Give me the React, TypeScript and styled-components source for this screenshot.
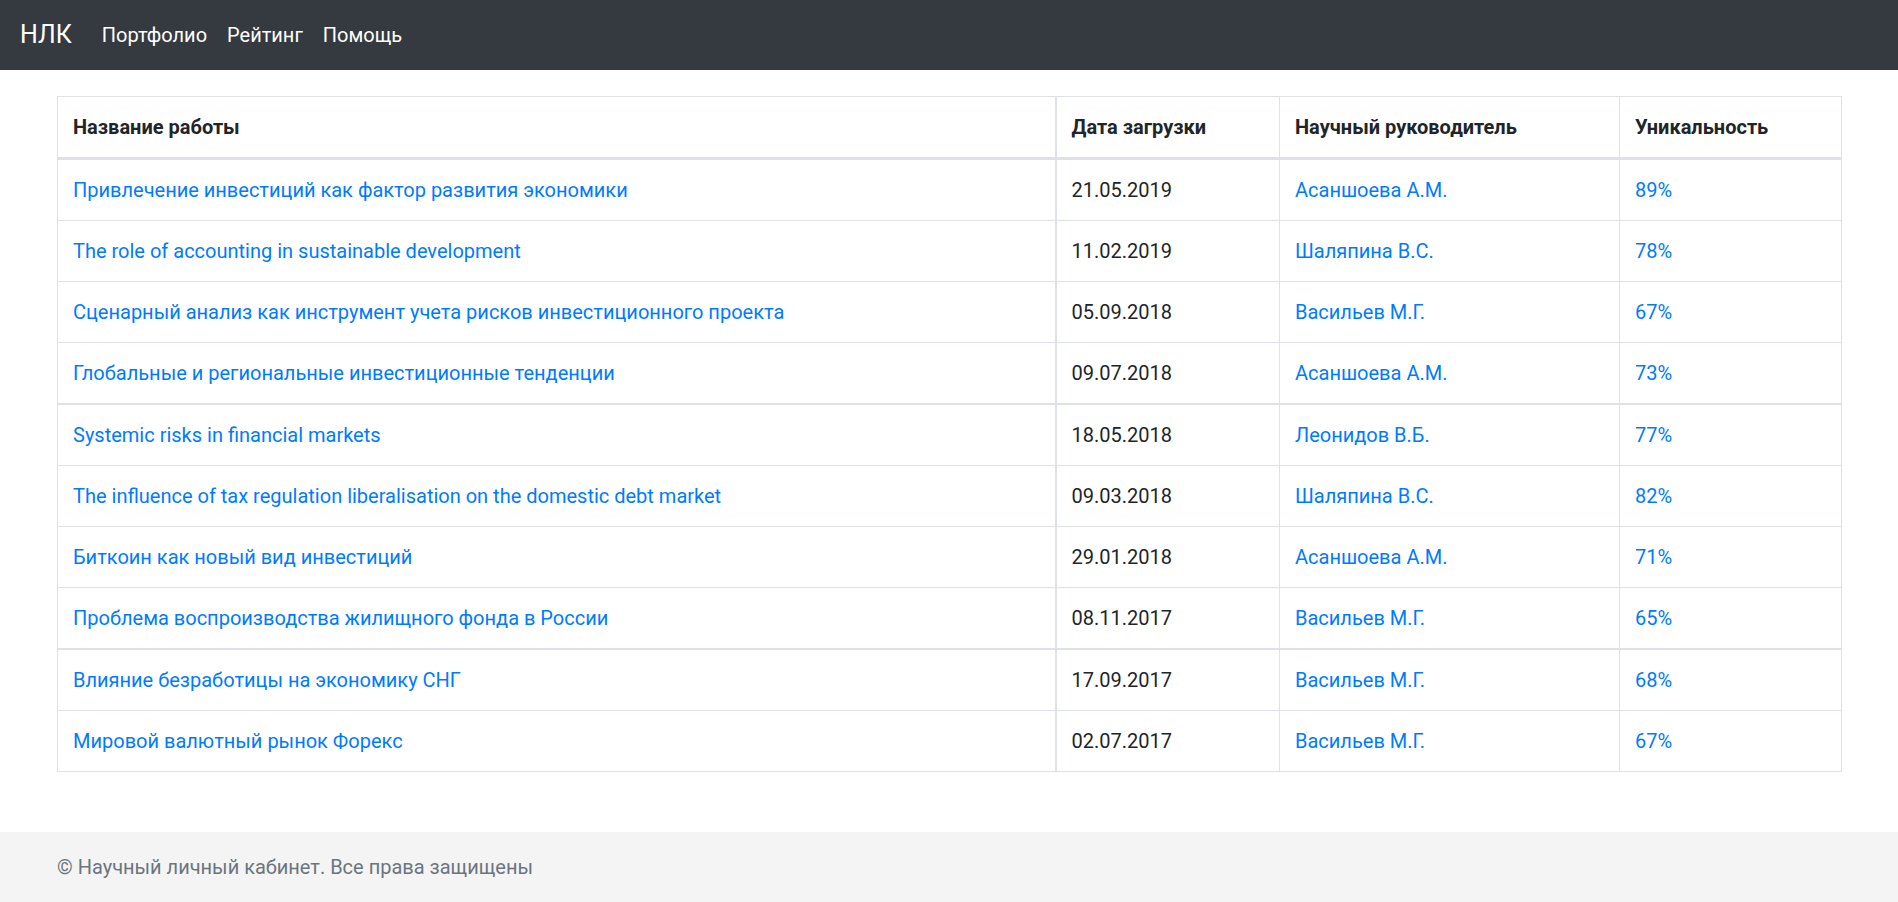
import React from "react";
import styled, { createGlobalStyle } from "styled-components";

const GlobalStyle = createGlobalStyle`
  html, body {
    margin: 0;
    padding: 0;
    background: #ffffff;
  }
  body {
    font-family: Roboto, "Noto Sans", "Liberation Sans", sans-serif;
    font-size: 20px;
    line-height: 30px;
    color: #212529;
  }
  * { box-sizing: border-box; }
`;

const Page = styled.div`
  display: flex;
  flex-direction: column;
  min-height: 902px;
`;

const NavBar = styled.nav`
  display: flex;
  align-items: center;
  height: 70px;
  padding: 0 20px;
  background: #343a40;
`;

const Brand = styled.a`
  font-size: 25px;
  line-height: 37.5px;
  color: #ffffff;
  margin-right: 20px;
  text-decoration: none;
`;

const NavList = styled.ul`
  display: flex;
  list-style: none;
  margin: 0;
  padding: 0;
`;

const NavLink = styled.a`
  display: block;
  padding: 0 10px;
  font-size: 20px;
  line-height: 30px;
  color: #ffffff;
  text-decoration: none;
`;

const Main = styled.main`
  flex: 1;
  padding: 26px 57px 60px;
`;

const Table = styled.table`
  width: 100%;
  table-layout: fixed;
  border-collapse: collapse;
  border: 1px solid #dee2e6;
`;

const HeadCell = styled.th<{ $wide?: boolean }>`
  text-align: left;
  font-weight: 700;
  padding: 15px;
  line-height: 30px;
  border: 1px solid #dee2e6;
  border-bottom: 3px solid #dee2e6;
  border-right-width: ${(p) => (p.$wide ? "2px" : "1px")};
  color: #212529;
`;

const Row = styled.tr<{ $thick?: boolean }>`
  & > td {
    border-top-width: ${(p) => (p.$thick ? "2px" : "1px")};
  }
`;

const Cell = styled.td<{ $wide?: boolean }>`
  padding: 15px;
  line-height: 30px;
  border: 1px solid #dee2e6;
  border-right-width: ${(p) => (p.$wide ? "2px" : "1px")};
  color: #212529;
  white-space: nowrap;
`;

const Link = styled.a`
  color: #007bff;
  text-decoration: none;
`;

const Footer = styled.footer`
  display: flex;
  align-items: center;
  height: 70px;
  padding: 0 57px;
  background: #f4f4f4;
  color: #6c757d;
  font-size: 20px;
`;

const rows = [
  ["Привлечение инвестиций как фактор развития экономики", "21.05.2019", "Асаншоева А.М.", "89%"],
  ["The role of accounting in sustainable development", "11.02.2019", "Шаляпина В.С.", "78%"],
  ["Сценарный анализ как инструмент учета рисков инвестиционного проекта", "05.09.2018", "Васильев М.Г.", "67%"],
  ["Глобальные и региональные инвестиционные тенденции", "09.07.2018", "Асаншоева А.М.", "73%"],
  ["Systemic risks in financial markets", "18.05.2018", "Леонидов В.Б.", "77%"],
  ["The influence of tax regulation liberalisation on the domestic debt market", "09.03.2018", "Шаляпина В.С.", "82%"],
  ["Биткоин как новый вид инвестиций", "29.01.2018", "Асаншоева А.М.", "71%"],
  ["Проблема воспроизводства жилищного фонда в России", "08.11.2017", "Васильев М.Г.", "65%"],
  ["Влияние безработицы на экономику СНГ", "17.09.2017", "Васильев М.Г.", "68%"],
  ["Мировой валютный рынок Форекс", "02.07.2017", "Васильев М.Г.", "67%"],
];

export default function App() {
  return (
    <Page>
      <GlobalStyle />
      <NavBar>
        <Brand href="#">НЛК</Brand>
        <NavList>
          <li><NavLink href="#">Портфолио</NavLink></li>
          <li><NavLink href="#">Рейтинг</NavLink></li>
          <li><NavLink href="#">Помощь</NavLink></li>
        </NavList>
      </NavBar>
      <Main>
        <Table>
          <colgroup>
            <col style={{ width: 998 }} />
            <col style={{ width: 224 }} />
            <col style={{ width: 340 }} />
            <col style={{ width: 222 }} />
          </colgroup>
          <thead>
            <tr>
              <HeadCell $wide>Название работы</HeadCell>
              <HeadCell>Дата загрузки</HeadCell>
              <HeadCell>Научный руководитель</HeadCell>
              <HeadCell>Уникальность</HeadCell>
            </tr>
          </thead>
          <tbody>
            {rows.map((r, i) => (
              <Row key={i} $thick={i === 4 || i === 8}>
                <Cell $wide><Link href="#">{r[0]}</Link></Cell>
                <Cell>{r[1]}</Cell>
                <Cell><Link href="#">{r[2]}</Link></Cell>
                <Cell><Link href="#">{r[3]}</Link></Cell>
              </Row>
            ))}
          </tbody>
        </Table>
      </Main>
      <Footer>© Научный личный кабинет. Все права защищены</Footer>
    </Page>
  );
}
